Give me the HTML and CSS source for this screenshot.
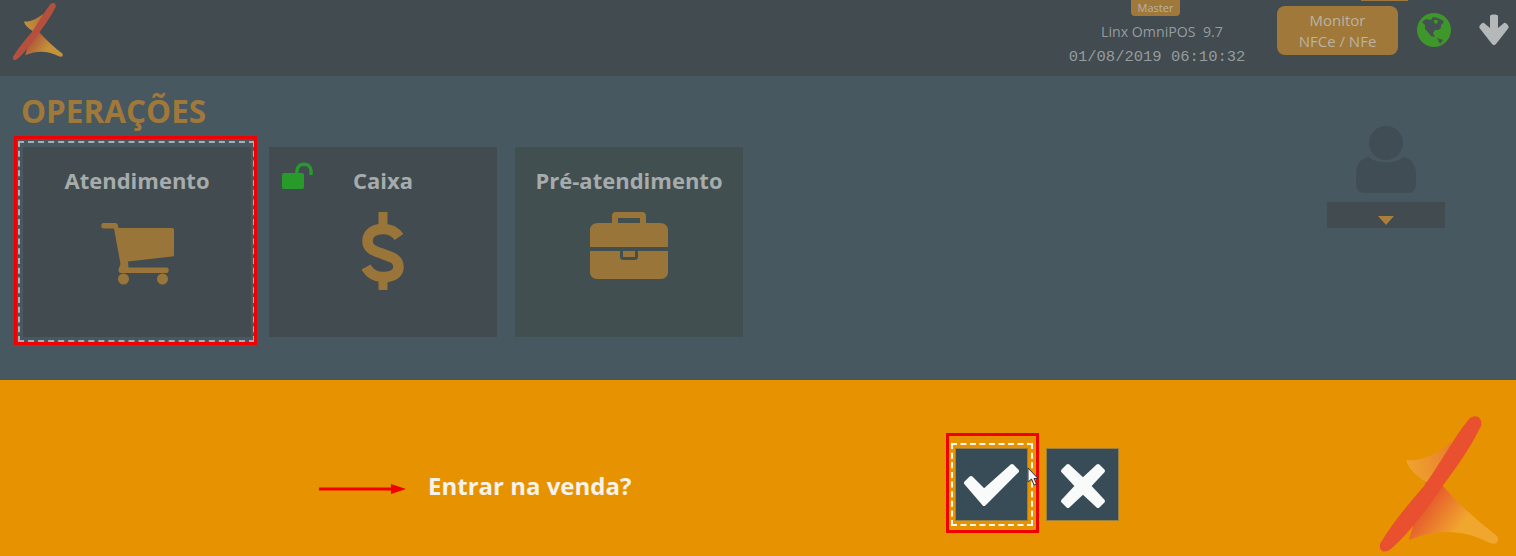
FILE: index.html
```html
<!DOCTYPE html>
<html lang="pt-BR">
<head>
  <meta charset="UTF-8" />
  <title>Linx OmniPOS</title>
  <link rel="stylesheet" href="styles.css">
</head>
<body>

  <header class="topbar">
    <svg class="top-logo" viewBox="0 0 156 156">
      <defs>
        <linearGradient id="upper-dim" gradientUnits="userSpaceOnUse" x1="47" y1="60" x2="92" y2="50">
          <stop offset="0" stop-color="#c2933a"/>
          <stop offset="1" stop-color="#b8703c"/>
        </linearGradient>
        <linearGradient id="lower-dim" gradientUnits="userSpaceOnUse" x1="72" y1="95" x2="106" y2="120">
          <stop offset="0" stop-color="#b0583c"/>
          <stop offset="1" stop-color="#c2933a"/>
        </linearGradient>
      </defs>
      <path fill="url(#upper-dim)" d="M47 60C60 62 78 55 92 42L83 85L67 82C58 76 50 70 47 60Z"/>
      <path fill="url(#lower-dim)" d="M67 82L83 85C100 105 120 122 138 136C141 142 137 145 131 143C105 130 80 128 50 140Z"/>
      <path fill="#b5503f" d="M110 19C117 13 124 18 122 26C110 50 97 68 85 84C70 106 52 131 33 148C26 154 20 152 21 144C34 122 48 106 65 86C80 66 93 40 110 19Z"/>
    </svg>

    <div class="app-info">
      <span class="badge">Master</span>
      <span class="app-name">Linx OmniPOS&nbsp; 9.7</span>
      <span class="clock">01/08/2019 06:10:32</span>
    </div>

    <div class="monitor">
      <span class="monitor-tab"></span>
      <button class="monitor-button">Monitor<br>NFCe / NFe</button>
    </div>

    <svg class="globe" viewBox="0 0 34 34">
      <circle cx="17" cy="17" r="17" fill="#3f962b"/>
      <path fill="#445052" d="M5 9L9 6L14 7L16 4L21 5L25 7L27 9L24 12L24 15L21 17L18 17L16 20L18 24L14 23L11 19L8 16L8 12Z"/>
      <path fill="#3f962b" d="M17 7L21 7L20 11L17 10Z"/>
      <path fill="#445052" d="M20 25L26 27L23 31Z"/>
    </svg>

    <svg class="down" viewBox="0 0 32 32">
      <path fill="#b4b8b9" d="M12 2C12 0 20 0 20 2V14L26 9C27.500 8 31.500 12 30.500 14L18 30C17 31.500 15 31.500 14 30L1.500 14C0.500 12 4.500 8 6 9L12 14Z"/>
    </svg>
  </header>

  <main class="operations">
    <section class="operations-list">
      <h1>OPERAÇÕES</h1>
      <div class="tiles">
        <div class="tile">
          <span class="focus-dash"></span>
          <span class="focus-red"></span>
          <h2>Atendimento</h2>
          <svg class="tile-icon cart" viewBox="0 0 73 62">
            <path fill="#9a7539" d="M2.500 0H14C16 0 17 1 17.500 5H71C72.500 5 73 6 73 7V32C73 33 72.500 33.500 71 33.500L27 38.500L27.500 44.500H65.500C68.500 44.500 68.500 50 65.500 50H20C17.500 50 17 48 18 45L19.500 41L13 5.500H2.500C-0.500 5.500 -0.500 0 2.500 0Z"/>
            <circle cx="22.500" cy="56" r="5.500" fill="#9a7539"/>
            <circle cx="61.500" cy="56" r="5.500" fill="#9a7539"/>
          </svg>
        </div>

        <div class="tile">
          <svg class="lock" viewBox="0 0 32 27">
            <rect x="0" y="11" width="22" height="16" rx="2" fill="#289a2a"/>
            <path fill="none" stroke="#289a2a" stroke-width="3.500" d="M15 11V9C15 0 29 0 29 9V13"/>
          </svg>
          <h2>Caixa</h2>
          <svg class="tile-icon dollar" viewBox="0 0 42 78">
            <path fill="none" stroke="#9a7539" stroke-width="10.500" d="M37 25C33 19 27 17 21 17C12 17 5.500 21 5.500 29C5.500 37 12 39 21 42C30 45 36.500 47 36.500 55C36.500 62 30 65 21 65C14 65 8 62 4 55"/>
            <rect x="16.500" y="0" width="9" height="14" fill="#9a7539"/>
            <rect x="16.500" y="64" width="9" height="14" fill="#9a7539"/>
          </svg>
        </div>

        <div class="tile tile-green">
          <h2>Pré-atendimento</h2>
          <svg class="tile-icon briefcase" viewBox="0 0 78 67">
            <path fill="#9a7539" d="M26 0H52C55 0 56 2 56 4V11H70C75 11 78 14 78 18V35H0V18C0 14 3 11 8 11H22V4C22 2 23 0 26 0ZM28 6V11H50V6Z"/>
            <path fill="#9a7539" d="M0 39H30V44C30 47 31 48 33 48H45C47 48 48 47 48 44V39H78V60C78 64 75 67 71 67H7C3 67 0 64 0 60Z"/>
            <rect x="33" y="39" width="12" height="6" fill="#9a7539"/>
          </svg>
        </div>
      </div>
    </section>

    <aside class="user">
      <svg class="user-icon" viewBox="0 0 62 68">
        <circle cx="31" cy="17" r="17" fill="#414d54"/>
        <path fill="#414d54" d="M14 31C20 38 42 38 48 31C56 32 61 38 61 48V57C61 64 58 67 52 67H10C4 67 1 64 1 57V48C1 38 6 32 14 31Z"/>
      </svg>
      <div class="user-select"><span class="caret"></span></div>
    </aside>
  </main>

  <footer class="confirm">
    <svg class="pointer" viewBox="0 0 88 10">
      <path fill="#f00000" d="M0 3.500H72V0L87 5L72 10V6.500H0Z"/>
    </svg>
    <span class="question">Entrar na venda?</span>

    <div class="actions">
      <button class="action">
        <span class="focus-dash light"></span>
        <span class="focus-red wide"></span>
        <svg viewBox="0 0 60 46">
          <path fill="#f8fbf9" stroke="#f8fbf9" stroke-width="4" stroke-linejoin="round" d="M4 20L9 15L22 28L50 3L55 8L22 41Z"/>
        </svg>
        <svg class="mouse" viewBox="0 0 12 20">
          <path fill="#f4f4f4" stroke="#333" stroke-width="1" d="M1 1V15L4.500 12L7 18L9.500 17L7 11.500H11Z"/>
        </svg>
      </button>
      <button class="action">
        <svg viewBox="0 0 46 46">
          <path fill="#f8fbf9" stroke="#f8fbf9" stroke-width="4" stroke-linejoin="round" d="M8 3L23 17L38 3L43 8L29 23L43 38L38 43L23 29L8 43L3 38L17 23L3 8Z"/>
        </svg>
      </button>
    </div>

    <svg class="brand" viewBox="0 0 156 156">
      <defs>
        <linearGradient id="upper" gradientUnits="userSpaceOnUse" x1="47" y1="60" x2="92" y2="50">
          <stop offset="0" stop-color="#efa42e"/>
          <stop offset="1" stop-color="#e8802c"/>
        </linearGradient>
        <linearGradient id="lower" gradientUnits="userSpaceOnUse" x1="72" y1="95" x2="106" y2="120">
          <stop offset="0" stop-color="#e5582c"/>
          <stop offset="1" stop-color="#f1a62e"/>
        </linearGradient>
      </defs>
      <path fill="url(#upper)" d="M47 60C60 62 78 55 92 42L83 85L67 82C58 76 50 70 47 60Z"/>
      <path fill="url(#lower)" d="M67 82L83 85C100 105 120 122 138 136C141 142 137 145 131 143C105 130 80 128 50 140Z"/>
      <path fill="#e8502f" d="M110 19C117 13 124 18 122 26C110 50 97 68 85 84C70 106 52 131 33 148C26 154 20 152 21 144C34 122 48 106 65 86C80 66 93 40 110 19Z"/>
    </svg>
  </footer>

</body>
</html>
```

FILE: styles.css
```css
* {
  box-sizing: border-box;
}

body {
  font-family: "Open Sans", "Noto Sans", sans-serif;
  margin: 0;
  width: 1516px;
  height: 556px;
  overflow: hidden;
  background-color: #475861;
}

/* Top bar */
.topbar {
  display: flex;
  height: 76px;
  background-color: #414b50;
  padding-left: 12px;
}

.top-logo {
  width: 66px;
  height: 66px;
  margin-left: -8px;
  margin-top: -4px;
}

.app-info {
  display: flex;
  flex-direction: column;
  align-items: center;
  width: 180px;
  margin-left: 997px;
  color: #969c9e;
}

.badge {
  background-color: #a0783a;
  color: #b9b3a2;
  font-size: 11px;
  line-height: 16px;
  padding: 0 5px;
  width: 49px;
  text-align: center;
  border-radius: 0 0 4px 4px;
  margin-left: -3px;
}

.app-name {
  font-size: 14.200px;
  line-height: 19px;
  margin-top: 6px;
  margin-left: 10px;
  white-space: nowrap;
}

.clock {
  font-family: "Liberation Mono", monospace;
  font-size: 15.500px;
  line-height: 18px;
  margin-top: 7px;
  white-space: nowrap;
}

.monitor {
  position: relative;
  margin-left: 30px;
  padding-top: 6px;
}

.monitor-tab {
  position: absolute;
  top: 0;
  left: 84px;
  width: 47px;
  height: 1px;
  background-color: #a0783a;
}

.monitor-button {
  display: block;
  width: 121px;
  height: 49px;
  background-color: #a0783a;
  border: none;
  border-radius: 8px;
  color: #b9b3a2;
  font-family: inherit;
  font-size: 15px;
  line-height: 21px;
  padding: 0;
}

.globe {
  width: 34px;
  height: 34px;
  margin-left: 19px;
  margin-top: 13px;
}

.down {
  width: 32px;
  height: 32px;
  margin-left: 27px;
  margin-top: 14px;
}

/* Operations */
.operations {
  display: flex;
  justify-content: space-between;
  height: 304px;
  background-color: #475861;
  padding: 0 71px 0 23px;
}

.operations-list h1 {
  margin: 13px 0 14px -2px;
  color: #a0783a;
  font-size: 31.500px;
  font-weight: 700;
  line-height: 44px;
  white-space: nowrap;
}

.tiles {
  display: flex;
  gap: 18px;
}

.tile {
  position: relative;
  width: 228px;
  height: 190px;
  background-color: #414b50;
  text-align: center;
}

.tile-green {
  background-color: #424f50;
}

.tile h2 {
  margin: 17px 0 0;
  color: #a6abab;
  font-size: 22px;
  font-weight: 700;
  line-height: 32px;
}

.tile-icon {
  display: block;
  margin: 0 auto;
}

.cart {
  width: 73px;
  height: 62px;
  margin-top: 27px;
}

.dollar {
  width: 42px;
  height: 78px;
  margin-top: 16px;
}

.briefcase {
  width: 78px;
  height: 67px;
  margin-top: 16px;
}

.lock {
  position: absolute;
  top: 15px;
  left: 13px;
  width: 32px;
  height: 27px;
}

.focus-dash {
  position: absolute;
  top: -6px;
  right: -4px;
  bottom: -5px;
  left: -5px;
  border: 2px dashed #aab0b2;
  pointer-events: none;
}

.focus-dash.light {
  top: -6px;
  right: -6px;
  bottom: -6px;
  left: -5px;
  border-color: #fbf6ea;
}

.focus-red {
  position: absolute;
  top: -11px;
  right: -6px;
  bottom: -8px;
  left: -9px;
  border: 3px solid #f00000;
  pointer-events: none;
}

.focus-red.wide {
  top: -16px;
  right: -12px;
  bottom: -13px;
  left: -10px;
}

/* User */
.user {
  display: flex;
  flex-direction: column;
  align-items: center;
  width: 118px;
  padding-top: 50px;
}

.user-icon {
  width: 62px;
  height: 68px;
}

.user-select {
  display: flex;
  justify-content: center;
  width: 118px;
  height: 26px;
  margin-top: 8px;
  padding-top: 14px;
  background-color: #414b50;
}

.caret {
  width: 0;
  height: 0;
  border-left: 8px solid transparent;
  border-right: 8px solid transparent;
  border-top: 9px solid #a97f3b;
}

/* Confirm bar */
.confirm {
  display: flex;
  align-items: flex-start;
  height: 176px;
  padding: 20px 0 0 319px;
  background-color: #e79200;
}

.pointer {
  width: 88px;
  height: 10px;
  margin-top: 84px;
}

.question {
  margin: 67px 0 0 21px;
  width: 527px;
  color: #f6f3ec;
  font-size: 24px;
  font-weight: 700;
  line-height: 38px;
}

.actions {
  display: flex;
  gap: 18px;
  margin-top: 48px;
}

.action {
  position: relative;
  display: flex;
  align-items: center;
  justify-content: center;
  width: 73px;
  height: 73px;
  padding: 2px 0 0;
  background-color: #384c58;
  border: 1px solid #9a7f40;
}

.action svg {
  width: 60px;
  height: 46px;
}

.action .mouse {
  position: absolute;
  top: 18px;
  left: 71px;
  width: 12px;
  height: 20px;
}

.brand {
  width: 156px;
  height: 156px;
  margin-left: 240px;
}
```
